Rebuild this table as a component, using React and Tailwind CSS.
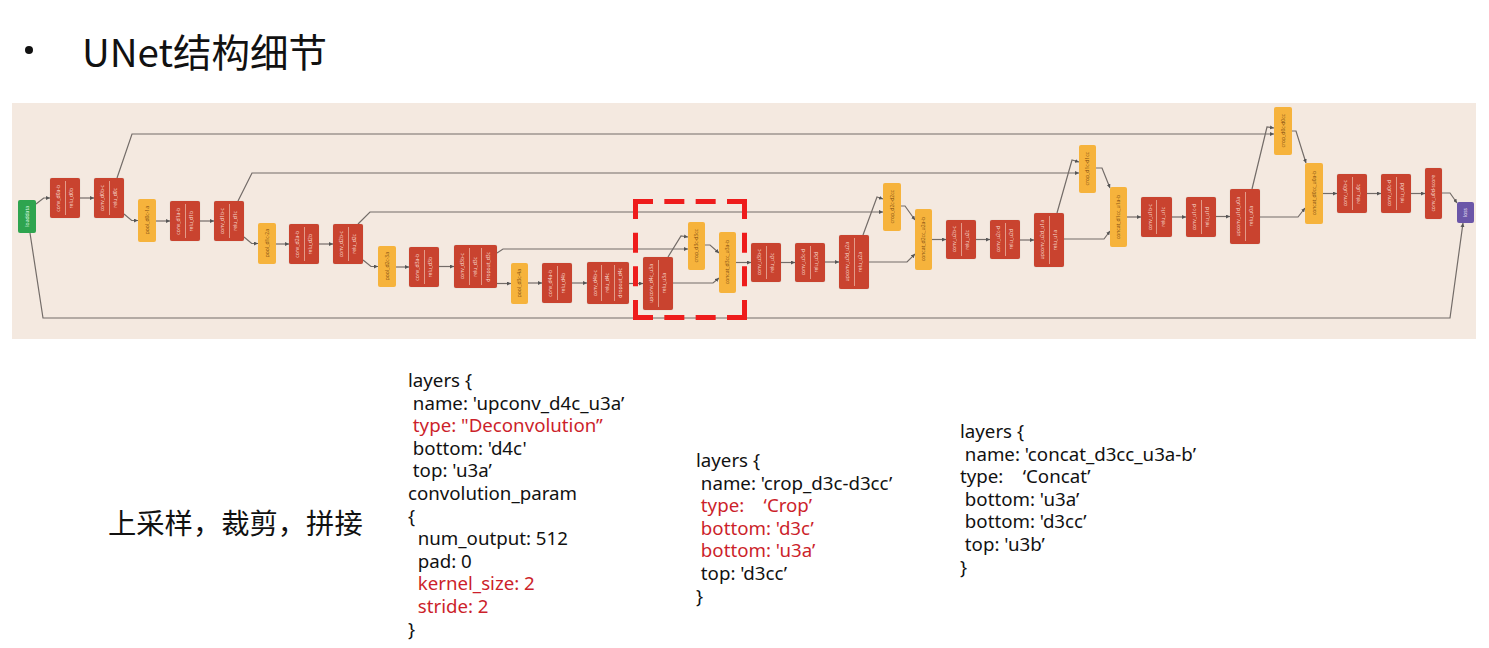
import React from "react";

const OX = 12;
const OY = 103;

const nodes = [
  { id: "data", x: 18, y: 200, w: 18, h: 33, k: "g", l: ["loaddata"] },
  { id: "c0a", x: 50, y: 178, w: 30, h: 40, k: "r", l: ["conv_d0a-b", "relu_d0b"] },
  { id: "c0b", x: 94, y: 178, w: 30, h: 40, k: "r", l: ["conv_d0b-c", "relu_d0c"] },
  { id: "p0", x: 138, y: 199, w: 18, h: 43, k: "y", l: ["pool_d0c-1a"] },
  { id: "c1a", x: 170, y: 201, w: 30, h: 40, k: "r", l: ["conv_d1a-b", "relu_d1b"] },
  { id: "c1b", x: 214, y: 201, w: 30, h: 40, k: "r", l: ["conv_d1b-c", "relu_d1c"] },
  { id: "p1", x: 258, y: 223, w: 18, h: 41, k: "y", l: ["pool_d1c-2a"] },
  { id: "c2a", x: 289, y: 224, w: 30, h: 40, k: "r", l: ["conv_d2a-b", "relu_d2b"] },
  { id: "c2b", x: 333, y: 224, w: 30, h: 40, k: "r", l: ["conv_d2b-c", "relu_d2c"] },
  { id: "p2", x: 378, y: 246, w: 18, h: 41, k: "y", l: ["pool_d2c-3a"] },
  { id: "c3a", x: 409, y: 247, w: 30, h: 40, k: "r", l: ["conv_d3a-b", "relu_d3b"] },
  { id: "c3b", x: 454, y: 245, w: 43, h: 43, k: "r", l: ["conv_d3b-c", "relu_d3c", "dropout_d3c"] },
  { id: "p3", x: 511, y: 263, w: 17, h: 41, k: "y", l: ["pool_d3c-4a"] },
  { id: "c4a", x: 542, y: 263, w: 30, h: 40, k: "r", l: ["conv_d4a-b", "relu_d4b"] },
  { id: "c4b", x: 587, y: 262, w: 42, h: 42, k: "r", l: ["conv_d4b-c", "relu_d4c", "dropout_d4c"] },
  { id: "up3", x: 643, y: 257, w: 30, h: 53, k: "r", l: ["upconv_d4c_u3a", "relu_u3a"] },
  { id: "crop3", x: 688, y: 222, w: 17, h: 48, k: "y", l: ["crop_d3c-d3cc"] },
  { id: "cat3", x: 719, y: 232, w: 17, h: 61, k: "y", l: ["concat_d3cc_u3a-b"] },
  { id: "cu3b", x: 751, y: 243, w: 30, h: 39, k: "r", l: ["conv_u3b-c", "relu_u3c"] },
  { id: "cu3c", x: 795, y: 243, w: 30, h: 39, k: "r", l: ["conv_u3c-d", "relu_u3d"] },
  { id: "up2", x: 839, y: 235, w: 30, h: 54, k: "r", l: ["upconv_u3d_u2a", "relu_u2a"] },
  { id: "crop2", x: 883, y: 183, w: 18, h: 48, k: "y", l: ["crop_d2c-d2cc"] },
  { id: "cat2", x: 915, y: 209, w: 17, h: 61, k: "y", l: ["concat_d2cc_u2a-b"] },
  { id: "cu2b", x: 946, y: 220, w: 30, h: 39, k: "r", l: ["conv_u2b-c", "relu_u2c"] },
  { id: "cu2c", x: 990, y: 220, w: 30, h: 39, k: "r", l: ["conv_u2c-d", "relu_u2d"] },
  { id: "up1", x: 1034, y: 213, w: 30, h: 54, k: "r", l: ["upconv_u2d_u1a", "relu_u1a"] },
  { id: "crop1", x: 1079, y: 145, w: 17, h: 48, k: "y", l: ["crop_d1c-d1cc"] },
  { id: "cat1", x: 1110, y: 187, w: 17, h: 60, k: "y", l: ["concat_d1cc_u1a-b"] },
  { id: "cu1b", x: 1141, y: 197, w: 31, h: 40, k: "r", l: ["conv_u1b-c", "relu_u1c"] },
  { id: "cu1c", x: 1186, y: 197, w: 30, h: 40, k: "r", l: ["conv_u1c-d", "relu_u1d"] },
  { id: "up0", x: 1230, y: 189, w: 30, h: 55, k: "r", l: ["upconv_u1d_u0a", "relu_u0a"] },
  { id: "crop0", x: 1274, y: 107, w: 18, h: 48, k: "y", l: ["crop_d0c-d0cc"] },
  { id: "cat0", x: 1305, y: 163, w: 18, h: 61, k: "y", l: ["concat_d0cc_u0a-b"] },
  { id: "cu0b", x: 1337, y: 174, w: 30, h: 39, k: "r", l: ["conv_u0b-c", "relu_u0c"] },
  { id: "cu0c", x: 1381, y: 174, w: 30, h: 39, k: "r", l: ["conv_u0c-d", "relu_u0d"] },
  { id: "score", x: 1425, y: 168, w: 17, h: 51, k: "r", l: ["conv_u0d-score"] },
  { id: "loss", x: 1457, y: 202, w: 17, h: 21, k: "p", l: ["loss"] },
];

const byId = Object.fromEntries(nodes.map((n) => [n.id, n]));

const chain = [
  ["data", "c0a"], ["c0a", "c0b"], ["c0b", "p0"], ["p0", "c1a"], ["c1a", "c1b"],
  ["c1b", "p1"], ["p1", "c2a"], ["c2a", "c2b"], ["c2b", "p2"], ["p2", "c3a"],
  ["c3a", "c3b"], ["c3b", "p3"], ["p3", "c4a"], ["c4a", "c4b"], ["c4b", "up3"],
  ["cat3", "cu3b"], ["cu3b", "cu3c"], ["cu3c", "up2"],
  ["cat2", "cu2b"], ["cu2b", "cu2c"], ["cu2c", "up1"],
  ["cat1", "cu1b"], ["cu1b", "cu1c"], ["cu1c", "up0"],
  ["cat0", "cu0b"], ["cu0b", "cu0c"], ["cu0c", "score"],
];

function chainPath(a, b) {
  const A = byId[a];
  const B = byId[b];
  const yb = B.y + B.h / 2;
  const ya = Math.min(Math.max(yb, A.y + 4), A.y + A.h - 4);
  const ax = A.x + A.w;
  const bx = B.x;
  if (Math.abs(ya - yb) < 1) return `M${ax},${yb} L${bx},${yb}`;
  const mx = ax + Math.min(8, (bx - ax) * 0.55);
  return `M${ax},${ya} L${mx},${yb} L${bx},${yb}`;
}

const extra = [
  "M117,178 L132,134 L1274,134",
  "M1252,189 L1267,127 L1274,128",
  "M1292,131 L1296,131 L1306,163",
  "M1260,217 L1298,217 L1305,208",
  "M238,201 L252,173 L1079,173",
  "M1057,213 L1072,160 L1079,162",
  "M1096,168 L1102,168 L1110,188",
  "M1064,239 L1104,239 L1110,231",
  "M358,224 L370,212 L883,212",
  "M863,235 L877,197 L883,199",
  "M901,206 L905,206 L915,220",
  "M869,262 L907,262 L915,254",
  "M497,253 L503,249 L688,249",
  "M668,257 L681,236 L688,237",
  "M705,245 L710,245 L719,253",
  "M673,283 L713,283 L719,278",
  "M30,233 L43,318 L1450,318 L1463,223",
  "M1442,193 L1450,193 L1457,203",
];

function Node({ n }) {
  const style = { left: n.x - OX, top: n.y - OY, width: n.w, height: n.h };
  if (n.k === "r") {
    return (
      <div
        className="absolute flex items-stretch justify-center rounded-[2px] bg-[#c9432f] px-[3px] py-[3px] shadow-[0_0_1px_rgba(0,0,0,0.25)]"
        style={style}
      >
        {n.l.map((t, i) => (
          <div
            key={i}
            className={
              i > 0
                ? "flex flex-1 items-center justify-center overflow-hidden border-l border-[#e39a88]"
                : "flex flex-1 items-center justify-center overflow-hidden"
            }
          >
            <span className="rotate-180 whitespace-nowrap text-[5px] leading-none text-[#f6d6cb] [writing-mode:vertical-rl]">
              {t}
            </span>
          </div>
        ))}
      </div>
    );
  }
  const colors =
    n.k === "y"
      ? "bg-[#f6b33c] text-[#8a5414]"
      : n.k === "g"
      ? "bg-[#2ea44f] text-[#d8f5df]"
      : "bg-[#6b56a8] text-[#e6e0f5]";
  return (
    <div
      className={`absolute flex items-center justify-center overflow-hidden rounded-[2px] ${colors}`}
      style={style}
    >
      <span className="rotate-180 whitespace-nowrap text-[5px] leading-none [writing-mode:vertical-rl]">
        {n.l[0]}
      </span>
    </div>
  );
}

function dashFor(len, d, n) {
  const g = (len - n * d) / (n - 1);
  return `${d} ${g}`;
}

function DashedBox() {
  const x1 = 633, x2 = 747, y1 = 199, y2 = 320;
  const hw = x2 - x1;
  const vh = y2 - y1;
  const hd = dashFor(hw, 20, 4);
  const vd = dashFor(vh, 20, 4);
  const s = 5;
  const c = "#ee1c1c";
  return (
    <g stroke={c} strokeWidth={s} fill="none">
      <line x1={x1} y1={y1 + s / 2} x2={x2} y2={y1 + s / 2} strokeDasharray={hd} />
      <line x1={x1} y1={y2 - s / 2} x2={x2} y2={y2 - s / 2} strokeDasharray={hd} />
      <line x1={x1 + s / 2} y1={y1} x2={x1 + s / 2} y2={y2} strokeDasharray={vd} />
      <line x1={x2 - s / 2} y1={y1} x2={x2 - s / 2} y2={y2} strokeDasharray={vd} />
    </g>
  );
}

function Diagram() {
  const paths = [...chain.map(([a, b]) => chainPath(a, b)), ...extra];
  return (
    <div className="relative ml-[12px] h-[236px] w-[1464px] bg-[#f4e9e0]">
      <svg
        className="absolute left-0 top-0"
        width="1464"
        height="236"
        viewBox={`${OX} ${OY} 1464 236`}
      >
        <defs>
          <marker
            id="ah"
            viewBox="0 0 6 6"
            refX="6"
            refY="3"
            markerWidth="4"
            markerHeight="4"
            markerUnits="userSpaceOnUse"
            orient="auto"
          >
            <path d="M0,0 L6,3 L0,6 z" fill="#555" />
          </marker>
        </defs>
        {paths.map((d, i) => (
          <path
            key={i}
            d={d}
            fill="none"
            stroke="#736c68"
            strokeWidth="1.2"
            markerEnd="url(#ah)"
          />
        ))}
      </svg>
      {nodes.map((n) => (
        <Node key={n.id} n={n} />
      ))}
      <svg
        className="absolute left-0 top-0"
        width="1464"
        height="236"
        viewBox={`${OX} ${OY} 1464 236`}
      >
        <DashedBox />
      </svg>
    </div>
  );
}

const R = "text-[#cc1f2b]";

function Code({ lines }) {
  return (
    <div className="whitespace-pre text-[18.7px] leading-[22.6px] text-[#111]">
      {lines.map(([t, red], i) => (
        <div key={i} className={red ? R : ""}>
          {t}
        </div>
      ))}
    </div>
  );
}

export default function App() {
  return (
    <div
      className="h-[648px] w-[1489px] overflow-hidden bg-white text-black"
      style={{ fontFamily: '"Noto Sans", "Noto Sans CJK SC", sans-serif' }}
    >
      <div className="flex h-[103px] items-center pb-[3px]">
        <div className="ml-[25px] h-[8px] w-[8px] rounded-full bg-[#111]" />
        <div
          className="ml-[49px] text-[38.5px] leading-none text-[#111]"
          style={{ fontFamily: '"Noto Sans CJK SC", sans-serif' }}
        >
          UNet结构细节
        </div>
      </div>
      <Diagram />
      <div className="flex items-start">
        <div
          className="ml-[108px] mt-[169px] w-[300px] text-[28.3px] leading-none text-[#111]"
          style={{ fontFamily: '"Noto Sans CJK SC", sans-serif' }}
        >
          上采样，裁剪，拼接
        </div>
        <div className="mt-[30px] w-[288px]">
          <Code
            lines={[
              ["layers {"],
              [" name: 'upconv_d4c_u3a’"],
              [" type: \"Deconvolution”", true],
              [" bottom: 'd4c'"],
              [" top: 'u3a’"],
              ["convolution_param"],
              ["{"],
              ["  num_output: 512"],
              ["  pad: 0"],
              ["  kernel_size: 2", true],
              ["  stride: 2", true],
              ["}"],
            ]}
          />
        </div>
        <div className="mt-[110px] w-[264px]">
          <Code
            lines={[
              ["layers {"],
              [" name: 'crop_d3c-d3cc’"],
              [" type:    ‘Crop’", true],
              [" bottom: 'd3c’", true],
              [" bottom: 'u3a’", true],
              [" top: 'd3cc’"],
              ["}"],
            ]}
          />
        </div>
        <div className="mt-[81px]">
          <Code
            lines={[
              ["layers {"],
              [" name: 'concat_d3cc_u3a-b’"],
              ["type:    ‘Concat’"],
              [" bottom: 'u3a’"],
              [" bottom: 'd3cc’"],
              [" top: 'u3b’"],
              ["}"],
            ]}
          />
        </div>
      </div>
    </div>
  );
}
